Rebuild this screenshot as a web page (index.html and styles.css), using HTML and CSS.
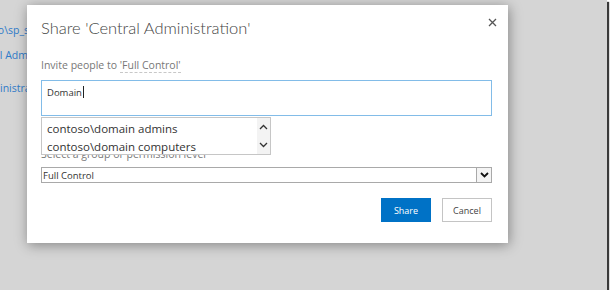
FILE: index.html
```html
<!DOCTYPE html>
<html>
<head>
    <meta name="viewport" content="width=device-width, initial-scale=1.0">
    <title>Share 'Central Administration'</title>
    <link rel="stylesheet" href="styles.css">
</head>
<body>
  <div class="shot">
    <!-- pagina de fondo -->
    <div class="side">
        <a class="side-link link-1" href="#">contoso\sp_setup</a>
        <a class="side-link link-2" href="#">Central Administration</a>
        <a class="side-link link-3" href="#">Central Administration</a>
    </div>

    <!-- dialogo -->
    <div class="dialog">
        <div class="dialog-head">
            <h1 class="dialog-title">Share 'Central Administration'</h1>
            <span class="close">
                <svg width="9" height="9" viewBox="0 0 9 9"><path d="M1 1 L8 8 M8 1 L1 8" stroke="#555" stroke-width="1.3" fill="none"/></svg>
            </span>
        </div>

        <p class="invite">Invite people to <span class="perm">'Full Control'</span></p>

        <div class="people">
            <div class="people-box">Domain<span class="caret"></span></div>
            <div class="suggest">
                <ul class="suggest-list">
                    <li>contoso\domain admins</li>
                    <li>contoso\domain computers</li>
                </ul>
                <div class="suggest-scroll">
                    <svg width="9" height="6" viewBox="0 0 9 6"><path d="M1 5 L4.5 1.5 L8 5" stroke="#333" stroke-width="1.3" fill="none"/></svg>
                    <svg width="9" height="6" viewBox="0 0 9 6"><path d="M1 1 L4.5 4.5 L8 1" stroke="#333" stroke-width="1.3" fill="none"/></svg>
                </div>
            </div>
        </div>

        <p class="level-label">Select a group or permission level</p>
        <div class="select">
            <span class="select-text">Full Control</span>
            <span class="select-btn">
                <svg width="9" height="6" viewBox="0 0 9 6"><path d="M1 1 L4.5 4.5 L8 1" stroke="#111" stroke-width="1.8" fill="none"/></svg>
            </span>
        </div>

        <div class="actions">
            <button class="btn btn-primary">Share</button>
            <button class="btn">Cancel</button>
        </div>
    </div>
  </div>
</body>
</html>
```

FILE: styles.css
```css
body {
    margin: 0;
    background-color: #fff;
    font-family: "Open Sans", "Noto Sans", sans-serif;
}

/* marco de la captura */
.shot {
    position: relative;
    width: 607px;
    height: 290px;
    background-color: #d5d5d5;
    box-shadow: 2px 2px 1px #3a3a3a;
    overflow: hidden;
}

/* enlaces de la pagina detras del dialogo */
.side {
    display: flex;
    flex-direction: column;
    width: 40px;
    padding-top: 22px;
    overflow: hidden;
}

.side-link {
    color: #2f7bc9;
    text-decoration: none;
    font-size: 10.5px;
    line-height: 16px;
    white-space: nowrap;
}

.link-1 { margin-left: -35px; }
.link-2 { margin-left: -33px; margin-top: 9px; }
.link-3 { margin-left: -61px; margin-top: 17px; }

.dialog {
    position: absolute;
    left: 27px;
    top: 5px;
    width: 451px;
    height: 230px;
    padding: 8px 16px 0 14px;
    background-color: #fff;
    box-shadow: 1px 2px 12px rgba(0, 0, 0, 0.38);
    color: #444;
}

.dialog-head {
    display: flex;
    justify-content: space-between;
    align-items: flex-start;
    height: 24px;
}

.dialog-title {
    margin: 0;
    padding-top: 3px;
    font-family: Lato, "Open Sans", sans-serif;
    font-size: 16.5px;
    font-weight: 300;
    line-height: 24px;
    color: #444;
}

.close {
    margin: 5px -5px 0 0;
    line-height: 0;
}

.invite {
    margin: 20px 0 0;
    font-size: 10.5px;
    line-height: 16px;
    color: #777;
}

.perm {
    border-bottom: 1px dashed #c8c8c8;
}

.people {
    position: relative;
    margin-top: 7px;
}

.people-box {
    height: 30px;
    padding: 4px 5px 0;
    border: 1px solid #82bce8;
    font-size: 9.5px;
    line-height: 16px;
    color: #333;
}

.caret {
    display: inline-block;
    width: 1px;
    height: 12px;
    margin-left: 1px;
    background-color: #222;
    vertical-align: -2px;
}

/* lista de sugerencias */
.suggest {
    position: absolute;
    left: 0;
    top: 37px;
    display: flex;
    width: 228px;
    height: 36px;
    border: 1px solid #c6c6c6;
    background-color: #fff;
}

.suggest-list {
    flex: 1;
    margin: 0;
    padding: 2px 0 0 5px;
    list-style: none;
    font-size: 11.5px;
    line-height: 18px;
    color: #333;
}

.suggest-scroll {
    display: flex;
    flex-direction: column;
    justify-content: space-around;
    align-items: center;
    width: 13px;
    background-color: #f3f3f3;
}

.level-label {
    margin: 30px 0 0;
    font-size: 10.5px;
    line-height: 16px;
    color: #777;
}

.select {
    display: flex;
    align-items: center;
    justify-content: space-between;
    height: 14px;
    margin-top: 5px;
    border: 1px solid #a9a9a9;
}

.select-text {
    padding-left: 1px;
    font-size: 9.5px;
    color: #333;
}

.select-btn {
    display: flex;
    align-items: center;
    justify-content: center;
    width: 14px;
    height: 14px;
    border-left: 1px solid #a9a9a9;
    background-color: #f4f4f4;
}

.actions {
    display: flex;
    justify-content: flex-end;
    gap: 11px;
    margin-top: 15px;
}

.btn {
    width: 50px;
    height: 24px;
    padding: 0;
    border: 1px solid #c4c4c4;
    background-color: #fff;
    font-family: "Open Sans", "Noto Sans", sans-serif;
    font-size: 9px;
    color: #444;
}

.btn-primary {
    border-color: #0072c6;
    background-color: #0072c6;
    color: #fff;
}
```
